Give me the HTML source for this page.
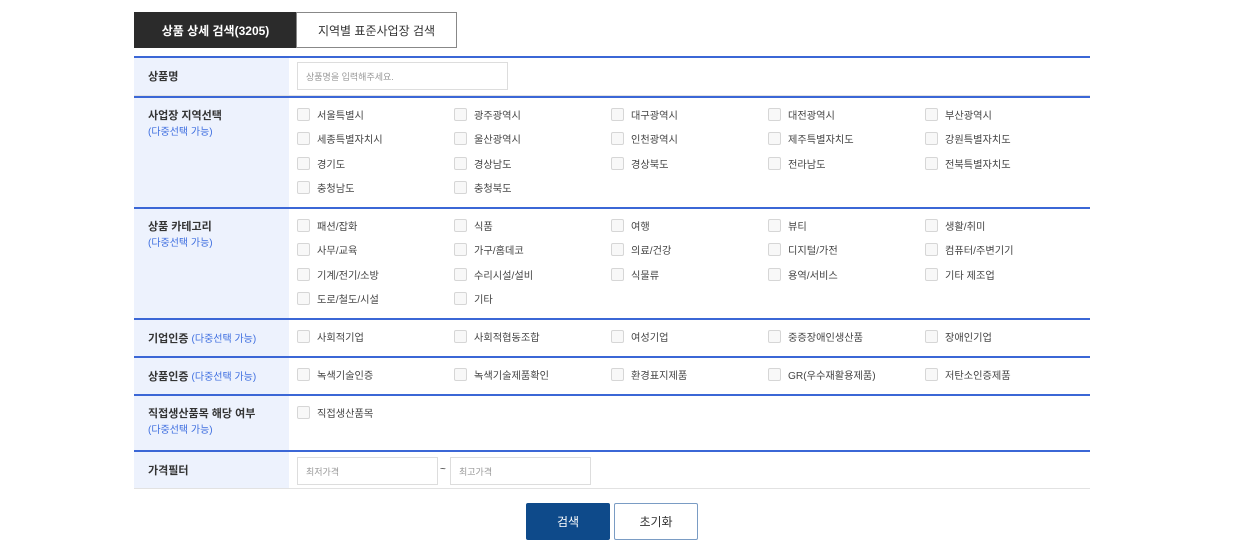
<!DOCTYPE html>
<html><head><meta charset="utf-8"><style>
*{margin:0;padding:0;box-sizing:border-box}
body{width:1233px;height:552px;background:#fff;font-family:"Liberation Sans","Noto Sans CJK KR",sans-serif;position:relative;overflow:hidden;color:#333}
.tab{position:absolute;top:12px;height:36px;font-size:12px;display:flex;align-items:center;justify-content:center}
.t1{left:134px;width:163px;background:#2b2b2b;color:#fff;font-weight:bold}
.t2{left:296px;width:161px;border:1px solid #888;color:#333}
.row{position:absolute;left:134px;width:956px;border-top:2px solid #3b67d6;border-bottom:1px solid #e2e2e2}
.lab{position:absolute;left:0;top:0;bottom:0;width:155px;background:#edf2fd;padding-left:14px;font-size:11px;font-weight:bold;color:#333}
.lab .s{color:#3f6fe0;font-weight:normal;font-size:10px}
.opts{position:absolute;left:163px;top:4px;display:grid;grid-template-columns:repeat(5,157px);grid-auto-rows:24.5px}
.o{display:flex;align-items:center;font-size:10.2px;color:#444}
.o i{display:inline-block;width:13px;height:13px;border:1px solid #d6d6d6;border-radius:2px;background:#f8f8f8;margin-right:7px}
.inp{position:absolute;height:28px;border:1px solid #ddd;font-size:9px;color:#999;padding-left:8px;display:flex;align-items:center}
.btn{position:absolute;top:503px;height:37px;width:84px;border-radius:2px;font-size:12px;display:flex;align-items:center;justify-content:center}
</style></head><body>
<div class="tab t1">상품 상세 검색(3205)</div>
<div class="tab t2">지역별 표준사업장 검색</div>

<div class="row" style="top:56px;height:40px"><div class="lab" style="padding-top:10px">상품명</div>
<div class="inp" style="left:163px;top:4px;width:211px">상품명을 입력해주세요.</div></div>

<div class="row" style="top:96px;height:112px"><div class="lab" style="padding-top:9px">사업장 지역선택<br><span class="s" style="line-height:20px">(다중선택 가능)</span></div>
<div class="opts">
<div class="o"><i></i>서울특별시</div><div class="o"><i></i>광주광역시</div><div class="o"><i></i>대구광역시</div><div class="o"><i></i>대전광역시</div><div class="o"><i></i>부산광역시</div>
<div class="o"><i></i>세종특별자치시</div><div class="o"><i></i>울산광역시</div><div class="o"><i></i>인천광역시</div><div class="o"><i></i>제주특별자치도</div><div class="o"><i></i>강원특별자치도</div>
<div class="o"><i></i>경기도</div><div class="o"><i></i>경상남도</div><div class="o"><i></i>경상북도</div><div class="o"><i></i>전라남도</div><div class="o"><i></i>전북특별자치도</div>
<div class="o"><i></i>충청남도</div><div class="o"><i></i>충청북도</div>
</div></div>

<div class="row" style="top:207px;height:112px"><div class="lab" style="padding-top:9px">상품 카테고리<br><span class="s" style="line-height:20px">(다중선택 가능)</span></div>
<div class="opts">
<div class="o"><i></i>패션/잡화</div><div class="o"><i></i>식품</div><div class="o"><i></i>여행</div><div class="o"><i></i>뷰티</div><div class="o"><i></i>생활/취미</div>
<div class="o"><i></i>사무/교육</div><div class="o"><i></i>가구/홈데코</div><div class="o"><i></i>의료/건강</div><div class="o"><i></i>디지털/가전</div><div class="o"><i></i>컴퓨터/주변기기</div>
<div class="o"><i></i>기계/전기/소방</div><div class="o"><i></i>수리시설/설비</div><div class="o"><i></i>식물류</div><div class="o"><i></i>용역/서비스</div><div class="o"><i></i>기타 제조업</div>
<div class="o"><i></i>도로/철도/시설</div><div class="o"><i></i>기타</div>
</div></div>

<div class="row" style="top:318px;height:39px"><div class="lab" style="padding-top:10px">기업인증 <span class="s">(다중선택 가능)</span></div>
<div class="opts">
<div class="o"><i></i>사회적기업</div><div class="o"><i></i>사회적협동조합</div><div class="o"><i></i>여성기업</div><div class="o"><i></i>중증장애인생산품</div><div class="o"><i></i>장애인기업</div>
</div></div>

<div class="row" style="top:356px;height:39px"><div class="lab" style="padding-top:10px">상품인증 <span class="s">(다중선택 가능)</span></div>
<div class="opts">
<div class="o"><i></i>녹색기술인증</div><div class="o"><i></i>녹색기술제품확인</div><div class="o"><i></i>환경표지제품</div><div class="o"><i></i>GR(우수재활용제품)</div><div class="o"><i></i>저탄소인증제품</div>
</div></div>

<div class="row" style="top:394px;height:57px"><div class="lab" style="padding-top:9px">직접생산품목 해당 여부<br><span class="s" style="line-height:20px">(다중선택 가능)</span></div>
<div class="opts"><div class="o"><i></i>직접생산품목</div></div></div>

<div class="row" style="top:450px;height:39px"><div class="lab" style="padding-top:10px">가격필터</div>
<div class="inp" style="left:163px;top:5px;width:141px">최저가격</div>
<div style="position:absolute;left:306px;top:12px;font-size:10px">~</div>
<div class="inp" style="left:316px;top:5px;width:141px">최고가격</div></div>

<div class="btn" style="left:526px;background:#0e4a8a;color:#fff">검색</div>
<div class="btn" style="left:614px;border:1px solid #7a9cc4;color:#333">초기화</div>
</body></html>
